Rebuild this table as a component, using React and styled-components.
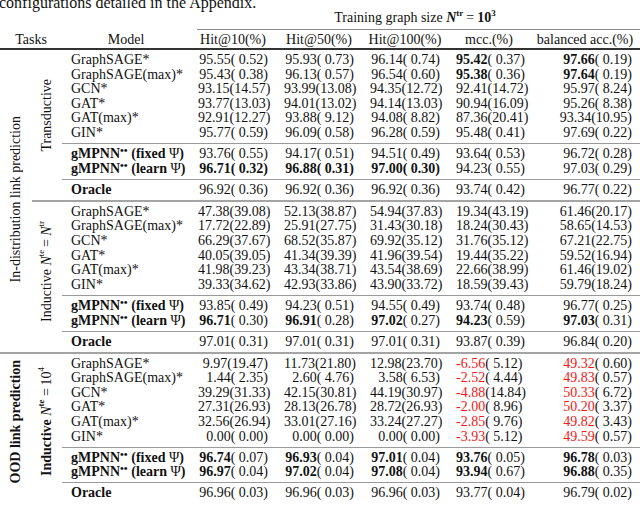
import React from 'react';
import styled, { createGlobalStyle } from 'styled-components';

const GlobalStyle = createGlobalStyle`
  html, body {
    margin: 0;
    padding: 0;
    background: #fff;
  }
  body {
    font-family: "Liberation Serif", "Times New Roman", serif;
    color: #111;
  }
`;

const RULES = {
  thin: '1px solid #9a9a9a',
  mid: '2px solid #a4a4a4',
  bottom: '2px solid #2a2a2a',
};

const Page = styled.div`
  width: 640px;
  height: 505px;
  overflow: hidden;
`;

const Caption = styled.p`
  margin: -6px 0 0 -1px;
  height: 17px;
  font-size: 16px;
  line-height: 18px;
  white-space: nowrap;
`;

const Table = styled.table`
  width: 640px;
  table-layout: fixed;
  border-collapse: collapse;
  font-size: 14px;
`;

const Col = styled.col`
  width: ${(p) => p.$w}px;
`;

const GroupHead = styled.th`
  padding: 0;
  font-weight: normal;
  vertical-align: top;
`;

const GroupTitle = styled.div`
  margin-left: 7px;
  padding: 0 7px 5px 0;
  line-height: 13px;
  text-align: center;
  border-bottom: 1px solid #8a8a8a;
`;

const HeadCell = styled.th`
  padding: 3px 0 1px;
  font-weight: normal;
  line-height: 14px;
  text-align: center;
  white-space: nowrap;
  border-bottom: 2px solid #333;
`;

const Td = styled.td`
  padding: ${(p) => (p.$first ? '3px' : '0')} 8px ${(p) => (p.$last ? (p.$rule === 'bottom' ? '4.5px' : '2.5px') : '0')} 8px;
  line-height: 14.6px;
  white-space: pre;
  text-align: right;
  vertical-align: middle;
  border-bottom: ${(p) => RULES[p.$rule] || 'none'};
`;

const ModelTd = styled(Td)`
  text-align: left;
  padding-left: 9px;
  padding-right: 0;
`;

const RotTd = styled.td`
  padding: 0;
  text-align: center;
  vertical-align: middle;
  border-bottom: ${(p) => RULES[p.$rule] || 'none'};
`;

const RotLabel = styled.span`
  display: inline-block;
  writing-mode: vertical-rl;
  transform: translateY(${(p) => p.$shift || 0}px) rotate(180deg);
  white-space: nowrap;
  line-height: 16px;
  font-weight: ${(p) => (p.$bold ? 'bold' : 'normal')};
`;

const MathN = styled.i`
  font-weight: normal;
`;

const Sup = styled.sup`
  font-size: ${(p) => p.$size || 9}px;
  line-height: 0;
  vertical-align: ${(p) => p.$lift || 5}px;
`;

const Eq = styled.span`
  padding-inline: 3px;
  font-weight: normal;
`;

const Strong = styled.b`
  font-weight: bold;
`;

const Plain = styled.span`
  font-weight: normal;
`;

const Num = styled.span`
  font-weight: ${(p) => (p.$bold ? 'bold' : 'normal')};
  color: ${(p) => (p.$red ? '#f21818' : 'inherit')};
`;

const groups = [
  {
    rule: 'thin',
    rows: [
      ['GraphSAGE*', ['95.55( 0.52)', '95.93( 0.73)', '96.14( 0.74)', '*95.42( 0.37)', '*97.66( 0.19)']],
      ['GraphSAGE(max)*', ['95.43( 0.38)', '96.13( 0.57)', '96.54( 0.60)', '*95.38( 0.36)', '*97.64( 0.19)']],
      ['GCN*', ['93.15(14.57)', '93.99(13.08)', '94.35(12.72)', '92.41(14.72)', '95.97( 8.24)']],
      ['GAT*', ['93.77(13.03)', '94.01(13.02)', '94.14(13.03)', '90.94(16.09)', '95.26( 8.38)']],
      ['GAT(max)*', ['92.91(12.27)', '93.88( 9.12)', '94.08( 8.82)', '87.36(20.41)', '93.34(10.95)']],
      ['GIN*', ['95.77( 0.59)', '96.09( 0.58)', '96.28( 0.59)', '95.48( 0.41)', '97.69( 0.22)']],
    ],
  },
  {
    rule: 'thin',
    rows: [
      ['gMPNN fixed', ['93.76( 0.55)', '94.17( 0.51)', '94.51( 0.49)', '93.64( 0.53)', '96.72( 0.28)']],
      ['gMPNN learn', ['#96.71( 0.32)', '#96.88( 0.31)', '#97.00( 0.30)', '94.23( 0.55)', '97.03( 0.29)']],
    ],
  },
  {
    rule: 'mid',
    rows: [['Oracle', ['96.92( 0.36)', '96.92( 0.36)', '96.92( 0.36)', '93.74( 0.42)', '96.77( 0.22)']]],
  },
  {
    rule: 'thin',
    rows: [
      ['GraphSAGE*', ['47.38(39.08)', '52.13(38.87)', '54.94(37.83)', '19.34(43.19)', '61.46(20.17)']],
      ['GraphSAGE(max)*', ['17.72(22.89)', '25.91(27.75)', '31.43(30.18)', '18.24(30.43)', '58.65(14.53)']],
      ['GCN*', ['66.29(37.67)', '68.52(35.87)', '69.92(35.12)', '31.76(35.12)', '67.21(22.75)']],
      ['GAT*', ['40.05(39.05)', '41.34(39.39)', '41.96(39.54)', '19.44(35.22)', '59.52(16.94)']],
      ['GAT(max)*', ['41.98(39.23)', '43.34(38.71)', '43.54(38.69)', '22.66(38.99)', '61.46(19.02)']],
      ['GIN*', ['39.33(34.62)', '42.93(33.86)', '43.90(33.72)', '18.59(39.43)', '59.79(18.24)']],
    ],
  },
  {
    rule: 'thin',
    rows: [
      ['gMPNN fixed', ['93.85( 0.49)', '94.23( 0.51)', '94.55( 0.49)', '93.74( 0.48)', '96.77( 0.25)']],
      ['gMPNN learn', ['*96.71( 0.30)', '*96.91( 0.28)', '*97.02( 0.27)', '*94.23( 0.59)', '*97.03( 0.31)']],
    ],
  },
  {
    rule: 'mid',
    rows: [['Oracle', ['97.01( 0.31)', '97.01( 0.31)', '97.01( 0.31)', '93.87( 0.39)', '96.84( 0.20)']]],
  },
  {
    rule: 'thin',
    rows: [
      ['GraphSAGE*', ['9.97(19.47)', '11.73(21.80)', '12.98(23.70)', '!-6.56( 5.12)', '!49.32( 0.60)']],
      ['GraphSAGE(max)*', ['1.44( 2.35)', '2.60( 4.76)', '3.58( 6.53)', '!-2.52( 4.44)', '!49.83( 0.57)']],
      ['GCN*', ['39.29(31.33)', '42.15(30.81)', '44.19(30.97)', '!-4.88(14.84)', '!50.33( 6.72)']],
      ['GAT*', ['27.31(26.93)', '28.13(26.78)', '28.72(26.93)', '!-2.00( 8.96)', '!50.20( 3.37)']],
      ['GAT(max)*', ['32.56(26.94)', '33.01(27.16)', '33.24(27.27)', '!-2.85( 9.76)', '!49.82( 3.43)']],
      ['GIN*', ['0.00( 0.00)', '0.00( 0.00)', '0.00( 0.00)', '!-3.93( 5.12)', '!49.59( 0.57)']],
    ],
  },
  {
    rule: 'thin',
    rows: [
      ['gMPNN fixed', ['*96.74( 0.07)', '*96.93( 0.04)', '*97.01( 0.04)', '*93.76( 0.05)', '*96.78( 0.03)']],
      ['gMPNN learn', ['*96.97( 0.04)', '*97.02( 0.04)', '*97.08( 0.04)', '*93.94( 0.67)', '*96.88( 0.35)']],
    ],
  },
  {
    rule: 'bottom',
    rows: [['Oracle', ['96.96( 0.03)', '96.96( 0.03)', '96.96( 0.03)', '93.77( 0.04)', '96.79( 0.02)']]],
  },
];

const tasks = [
  { from: 0, to: 5, bold: false, shift: 0, label: 'In-distribution link prediction' },
  { from: 6, to: 8, bold: true, shift: -6, label: 'OOD link prediction' },
];

const settings = [
  { from: 0, to: 2, bold: false, shift: -8, label: 'Transductive' },
  {
    from: 3,
    to: 5,
    bold: false,
    shift: -3,
    label: (
      <>
        Inductive <MathN>N</MathN>
        <Sup $lift={6}>te</Sup>
        <Eq>=</Eq>
        <MathN>N</MathN>
        <Sup $lift={6}>tr</Sup>
      </>
    ),
  },
  {
    from: 6,
    to: 8,
    bold: true,
    shift: -6,
    label: (
      <>
        Inductive <MathN>N</MathN>
        <Sup $lift={6}>te</Sup>
        <Eq>=</Eq>
        <Plain>10</Plain>
        <Sup $lift={6}>
          <Plain>4</Plain>
        </Sup>
      </>
    ),
  },
];

const metrics = ['Hit@10(%)', 'Hit@50(%)', 'Hit@100(%)', 'mcc.(%)', 'balanced acc.(%)'];

const countRows = (from, to) =>
  groups.slice(from, to + 1).reduce((n, g) => n + g.rows.length, 0);

const Value = ({ text }) => {
  let mode = '';
  let t = text;
  if ('*#!'.includes(t[0])) {
    mode = t[0];
    t = t.slice(1);
  }
  const i = t.indexOf('(');
  return (
    <>
      <Num $bold={mode === '*' || mode === '#'} $red={mode === '!'}>
        {t.slice(0, i)}
      </Num>
      <Num $bold={mode === '#'}>{t.slice(i)}</Num>
    </>
  );
};

const ModelName = ({ name }) => {
  if (name === 'Oracle') return <Strong>Oracle</Strong>;
  if (name.startsWith('gMPNN')) {
    const mode = name.split(' ')[1];
    return (
      <Strong>
        gMPNN
        <Sup $size={11} $lift={4}>
          ••
        </Sup>{' '}
        ({mode} <Plain>Ψ</Plain>)
      </Strong>
    );
  }
  return name;
};

const RotCell = ({ section }) => (
  <RotTd rowSpan={countRows(section.from, section.to)} $rule={groups[section.to].rule}>
    <RotLabel $bold={section.bold} $shift={section.shift}>
      {section.label}
    </RotLabel>
  </RotTd>
);

const App = () => {
  const body = [];
  groups.forEach((group, gi) => {
    group.rows.forEach(([model, vals], ri) => {
      const first = ri === 0;
      const last = ri === group.rows.length - 1;
      const rule = last ? group.rule : undefined;
      const task = first ? tasks.find((s) => s.from === gi) : null;
      const setting = first ? settings.find((s) => s.from === gi) : null;
      body.push(
        <tr key={`${gi}-${ri}`}>
          {task && <RotCell section={task} />}
          {setting && <RotCell section={setting} />}
          <ModelTd $first={first} $last={last} $rule={rule}>
            <ModelName name={model} />
          </ModelTd>
          {vals.map((v, vi) => (
            <Td key={vi} $first={first} $last={last} $rule={rule}>
              <Value text={v} />
            </Td>
          ))}
        </tr>
      );
    });
  });

  return (
    <Page>
      <GlobalStyle />
      <Caption>configurations detailed in the Appendix.</Caption>
      <Table>
        <colgroup>
          <Col $w={32} />
          <Col $w={30} />
          <Col $w={128} />
          <Col $w={86} />
          <Col $w={86} />
          <Col $w={86} />
          <Col $w={82} />
          <Col $w={110} />
        </colgroup>
        <thead>
          <tr>
            <GroupHead colSpan={3} />
            <GroupHead colSpan={5}>
              <GroupTitle>
                Training graph size{' '}
                <Strong>
                  <i>N</i>
                  <Sup $lift={6}>tr</Sup>
                  <Eq>=</Eq>
                  10<Sup $lift={6}>3</Sup>
                </Strong>
              </GroupTitle>
            </GroupHead>
          </tr>
          <tr>
            <HeadCell colSpan={2}>Tasks</HeadCell>
            <HeadCell>Model</HeadCell>
            {metrics.map((m) => (
              <HeadCell key={m}>{m}</HeadCell>
            ))}
          </tr>
        </thead>
        <tbody>{body}</tbody>
      </Table>
    </Page>
  );
};

export default App;
